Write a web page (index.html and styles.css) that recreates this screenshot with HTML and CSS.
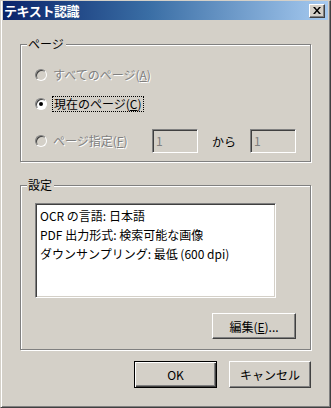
FILE: index.html
```html
<!DOCTYPE html>
<html lang="ja">
<head>
<meta charset="utf-8">
<link rel="stylesheet" href="styles.css">
</head>
<body>
<div class="window">
  <div class="titlebar">
    <span class="title">テキスト認識</span>
    <span class="close"><svg width="8" height="7" viewBox="0 0 8 7"><path d="M0 0h2l2 2.5L6 0h2L5 3.5 8 7H6L4 4.5 2 7H0l3-3.5z" fill="#000"/></svg></span>
  </div>
  <div class="content">
    <div class="group g1">
      <span class="legend">ページ</span>
      <div class="row r1"><span class="radio"></span><span class="lbl disabled">すべてのページ(<u>A</u>)</span></div>
      <div class="row r2"><span class="radio on"></span><span class="lbl focus">現在のページ(<u>C</u>)</span></div>
      <div class="row r3">
        <span class="radio"></span><span class="lbl disabled w3">ページ指定(<u>F</u>)</span>
        <span class="field">1</span>
        <span class="kara">から</span>
        <span class="field">1</span>
      </div>
    </div>
    <div class="group g2">
      <span class="legend">設定</span>
      <div class="list">
        <div>OCR の言語: 日本語</div>
        <div>PDF 出力形式: 検索可能な画像</div>
        <div>ダウンサンプリング: 最低 (600 dpi)</div>
      </div>
      <div class="editrow"><span class="btn edit">編集(<u>E</u>)...</span></div>
    </div>
    <div class="actions">
      <span class="btn ok">OK</span>
      <span class="btn cancel">キャンセル</span>
    </div>
  </div>
</div>
</body>
</html>
```
FILE: styles.css
```css
* { box-sizing: border-box; }
html, body { margin: 0; padding: 0; background: #d4d0c8; }
body {
  font-family: "Noto Sans CJK JP", "Noto Sans", sans-serif;
  font-size: 12px;
  color: #000;
}
.window {
  width: 331px;
  height: 408px;
  background: #d4d0c8;
  border-style: solid;
  border-width: 1px;
  border-color: #d4d0c8 #404040 #404040 #d4d0c8;
  box-shadow: inset 1px 0 0 #fff, inset -1px -1px 0 #808080;
  padding: 0 2px;
}
.titlebar {
  height: 19px;
  background: linear-gradient(to right, #0a246a 0%, #3a6ea5 45%, #a6caf0 100%);
  display: flex;
  align-items: center;
  justify-content: space-between;
  padding: 0 3px 0 1px;
}
.title {
  color: #fff;
  font-weight: bold;
  font-size: 13px;
  line-height: 19px;
  letter-spacing: -0.4px;
}
.close {
  width: 16px;
  height: 14px;
  background: #d4d0c8;
  border: 1px solid;
  border-color: #fff #404040 #404040 #fff;
  box-shadow: inset -1px -1px 0 #808080;
  display: flex;
  align-items: center;
  justify-content: center;
  padding-right: 1px;
}
.close svg { display: block; }
.content {
  padding: 0 18px 0 17px;
}
.group {
  position: relative;
  border: 1px solid #808080;
  box-shadow: 1px 1px 0 #fff, inset 1px 1px 0 #fff;
  margin-right: -1px;
}
.legend {
  position: absolute;
  left: 6px;
  top: -9px;
  background: #d4d0c8;
  padding: 0 2px 0 1px;
  line-height: 16px;
}
.g1 {
  margin-top: 24px;
  height: 118px;
  padding: 22px 0 0 14px;
}
.row {
  display: flex;
  align-items: center;
  height: 16px;
}
.r2 { margin-top: 13px; }
.r3 { margin-top: 17px; height: 24px; }
.radio {
  width: 12px;
  height: 12px;
  border-radius: 50%;
  background: #d4d0c8;
  border: 1px solid;
  border-color: #808080 #fff #fff #808080;
  box-shadow: inset 1px 1px 0 #404040;
  margin-right: 5px;
  flex: none;
  position: relative;
}
.radio.on { background: #fff; }
.radio.on::after {
  content: "";
  position: absolute;
  left: 3px;
  top: 3px;
  width: 4px;
  height: 4px;
  border-radius: 50%;
  background: #000;
}
.lbl { line-height: 16px; padding: 0 1px; }
.lbl u { text-decoration: underline; }
.disabled { color: #808080; text-shadow: 1px 1px 0 #fff; }
.focus { border: 1px dotted #000; line-height: 14px; }
.w3 { width: 100px; }
.field {
  width: 46px;
  height: 24px;
  border: 1px solid;
  border-color: #808080 #fff #fff #808080;
  box-shadow: inset 1px 1px 0 #404040;
  color: #808080;
  padding: 2px 0 0 3px;
  line-height: 18px;
}
.kara { margin: 0 14px 0 14px; }
.g2 {
  margin-top: 23px;
  height: 165px;
  padding: 17px 14px 0 14px;
}
.list {
  width: 241px;
  height: 95px;
  background: #fff;
  border: 1px solid;
  border-color: #808080 #fff #fff #808080;
  box-shadow: inset 1px 1px 0 #404040, inset -1px -1px 0 #d4d0c8;
  padding: 2px 4px;
  line-height: 19px;
}
.editrow {
  display: flex;
  justify-content: flex-end;
  margin-top: 15px;
}
.btn {
  display: flex;
  align-items: center;
  justify-content: center;
  background: #d4d0c8;
  border: 1px solid;
  border-color: #fff #404040 #404040 #fff;
  box-shadow: inset -1px -1px 0 #808080;
}
.edit { width: 84px; height: 26px; }
.actions {
  display: flex;
  justify-content: flex-end;
  gap: 12px;
  margin-top: 11px;
  margin-right: -1px;
}
.ok {
  width: 83px;
  height: 27px;
  border: 1px solid #000;
  box-shadow: inset 1px 1px 0 #fff, inset -1px -1px 0 #404040, inset -2px -2px 0 #808080;
}
.cancel { width: 82px; height: 27px; }
```
